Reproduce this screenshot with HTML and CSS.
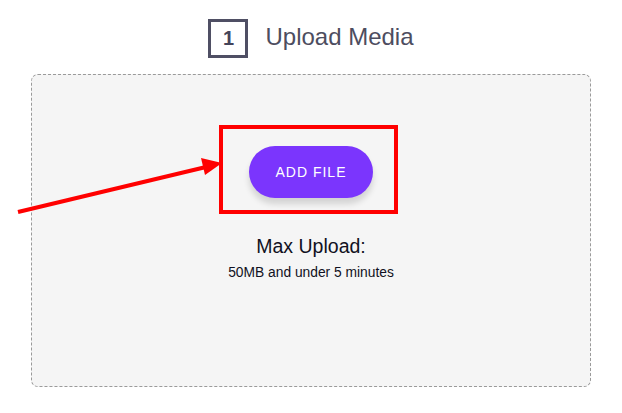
FILE: index.html
```html
<!DOCTYPE html>
<html>
<head>
<meta charset="utf-8">
<link rel="stylesheet" href="styles.css">
</head>
<body>
<div class="page">
  <div class="step-header">
    <div class="step-num">1</div>
    <div class="step-title">Upload Media</div>
  </div>
  <div class="dropzone">
    <button class="add-btn">ADD FILE</button>
    <div class="max-title">Max Upload:</div>
    <div class="max-sub">50MB and under 5 minutes</div>
  </div>
  <svg class="annot" width="622" height="413" viewBox="0 0 622 413">
    <rect x="221" y="127" width="175" height="85" fill="none" stroke="#ff0000" stroke-width="4"/>
    <line x1="18" y1="212" x2="206" y2="167" stroke="#ff0000" stroke-width="4"/>
    <polygon points="222,163 201,158 205,175" fill="#ff0000"/>
  </svg>
</div>
</body>
</html>
```
FILE: styles.css
```css
html, body {
  margin: 0;
  padding: 0;
  background: #ffffff;
}
.page {
  position: relative;
  width: 622px;
  height: 413px;
  font-family: "Liberation Sans", Arial, sans-serif;
  overflow: hidden;
}
.step-header {
  display: flex;
  justify-content: center;
  align-items: center;
  gap: 17px;
  padding-top: 19px;
}
.step-num {
  box-sizing: border-box;
  width: 40px;
  height: 39px;
  border: 3px solid #4f4f64;
  color: #44445a;
  font-size: 20px;
  font-weight: bold;
  display: flex;
  align-items: center;
  justify-content: center;
}
.step-title {
  color: #4d4d60;
  font-size: 24px;
  line-height: 30px;
  margin-top: -4px;
}
.dropzone {
  box-sizing: border-box;
  margin: 16px 0 0 31px;
  width: 560px;
  height: 313px;
  background: #f5f5f5;
  border: 1px dashed #9a9a9a;
  border-radius: 7px;
  display: flex;
  flex-direction: column;
  align-items: center;
  padding-top: 71px;
}
.add-btn {
  width: 124px;
  height: 52px;
  border: none;
  border-radius: 26px;
  background: #7b35fd;
  color: #ffffff;
  font-family: "Liberation Sans", Arial, sans-serif;
  font-size: 14px;
  letter-spacing: 1px;
  box-shadow: 0 6px 6px rgba(0, 0, 0, 0.14);
  padding: 0;
}
.max-title {
  margin-top: 36px;
  font-size: 19.5px;
  line-height: 24px;
  color: #111122;
}
.max-sub {
  margin-top: 6px;
  font-size: 13.8px;
  line-height: 18px;
  color: #111122;
}
.annot {
  position: absolute;
  left: 0;
  top: 0;
  pointer-events: none;
}
```
